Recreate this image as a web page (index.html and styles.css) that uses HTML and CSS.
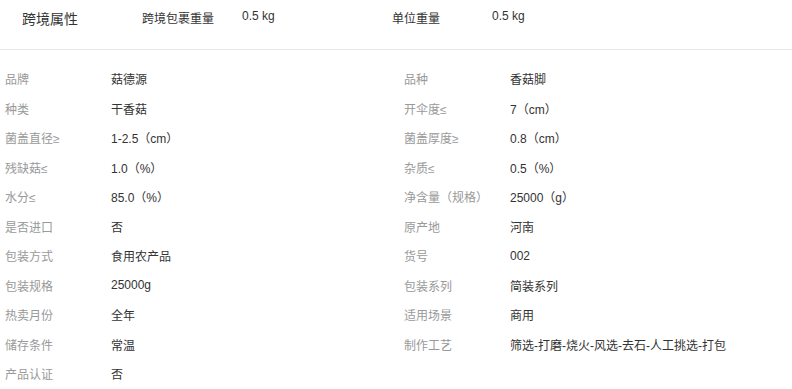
FILE: index.html
```html
<!DOCTYPE html>
<html lang="zh-CN">
<head>
<meta charset="utf-8">
<link rel="stylesheet" href="styles.css">
</head>
<body>
<div class="page">
  <div class="head">
    <div class="head-title">跨境属性</div>
    <div class="head-item"><span class="head-label">跨境包裹重量</span><span class="head-value">0.5 kg</span></div>
    <div class="head-item"><span class="head-label">单位重量</span><span class="head-value">0.5 kg</span></div>
  </div>
  <div class="attrs">
    <div class="attr"><span class="label">品牌</span><span class="value">菇德源</span></div>
    <div class="attr"><span class="label">品种</span><span class="value">香菇脚</span></div>
    <div class="attr"><span class="label">种类</span><span class="value">干香菇</span></div>
    <div class="attr"><span class="label">开伞度≤</span><span class="value">7（cm）</span></div>
    <div class="attr"><span class="label">菌盖直径≥</span><span class="value">1-2.5（cm）</span></div>
    <div class="attr"><span class="label">菌盖厚度≥</span><span class="value">0.8（cm）</span></div>
    <div class="attr"><span class="label">残缺菇≤</span><span class="value">1.0（%）</span></div>
    <div class="attr"><span class="label">杂质≤</span><span class="value">0.5（%）</span></div>
    <div class="attr"><span class="label">水分≤</span><span class="value">85.0（%）</span></div>
    <div class="attr"><span class="label">净含量（规格）</span><span class="value">25000（g）</span></div>
    <div class="attr"><span class="label">是否进口</span><span class="value">否</span></div>
    <div class="attr"><span class="label">原产地</span><span class="value">河南</span></div>
    <div class="attr"><span class="label">包装方式</span><span class="value">食用农产品</span></div>
    <div class="attr"><span class="label">货号</span><span class="value">002</span></div>
    <div class="attr"><span class="label">包装规格</span><span class="value">25000g</span></div>
    <div class="attr"><span class="label">包装系列</span><span class="value">简装系列</span></div>
    <div class="attr"><span class="label">热卖月份</span><span class="value">全年</span></div>
    <div class="attr"><span class="label">适用场景</span><span class="value">商用</span></div>
    <div class="attr"><span class="label">储存条件</span><span class="value">常温</span></div>
    <div class="attr"><span class="label">制作工艺</span><span class="value">筛选-打磨-烧火-风选-去石-人工挑选-打包</span></div>
    <div class="attr"><span class="label">产品认证</span><span class="value">否</span></div>
  </div>
</div>
</body>
</html>
```

FILE: styles.css
```css
html, body {
  margin: 0;
  padding: 0;
  background: #fff;
}
body {
  font-family: "Liberation Sans", "Noto Sans CJK SC", sans-serif;
  font-size: 12px;
  color: #333;
  overflow: hidden;
}
.page {
  width: 792px;
}
.head {
  display: flex;
  align-items: center;
  height: 35px;
  padding-left: 22px;
  padding-bottom: 14px;
  border-bottom: 1px solid #e8e8e8;
  margin-bottom: 14px;
}
.head-title {
  width: 120px;
  font-size: 14px;
  color: #333;
}
.head-item {
  display: flex;
  width: 250px;
}
.head-label {
  width: 100px;
  color: #333;
}
.head-value {
  color: #333;
}
.attrs {
  display: grid;
  grid-template-columns: 399px 1fr;
  grid-auto-rows: 29.5px;
}
.attr {
  display: flex;
  align-items: center;
  padding-left: 5px;
}
.label {
  width: 106px;
  flex: none;
  color: #999;
}
.value {
  color: #333;
}
```
